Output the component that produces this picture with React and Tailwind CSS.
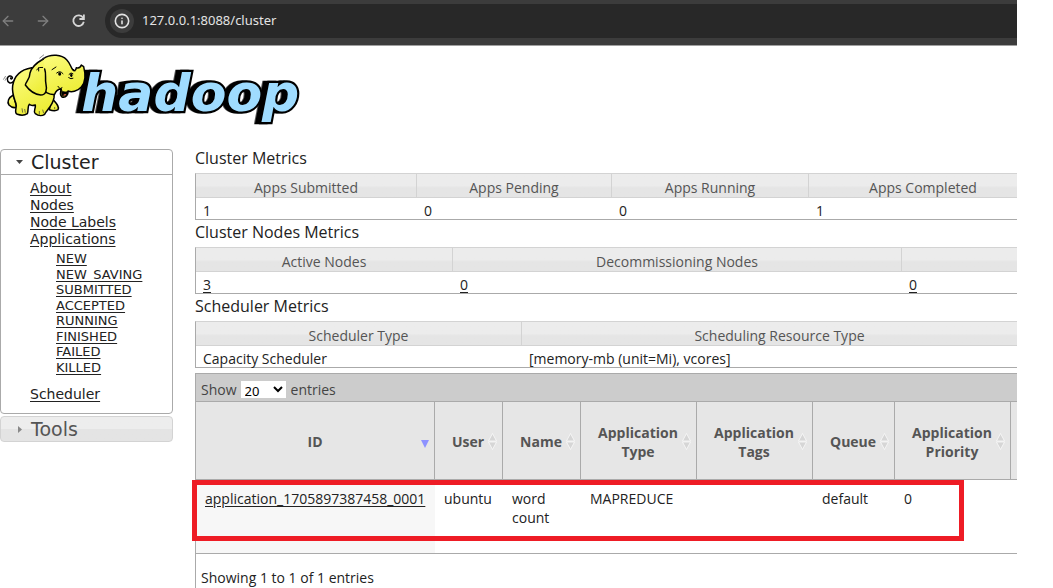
import { ArrowLeft, ArrowRight, Info } from "lucide-react";

const appLinks = ["NEW", "NEW_SAVING", "SUBMITTED", "ACCEPTED", "RUNNING", "FINISHED", "FAILED", "KILLED"];

function BrowserBar() {
  return (
    <header className="flex h-[46px] items-center border-b border-[#a0a0a0] bg-[#3c3c3c] pb-1">
      <button aria-label="Back" className="flex w-[35px] justify-start text-[#7f7f7f]">
        <ArrowLeft size={16} strokeWidth={2} />
      </button>
      <button aria-label="Forward" className="flex w-9 justify-start text-[#7f7f7f]">
        <ArrowRight size={16} strokeWidth={2} />
      </button>
      <button aria-label="Reload" className="flex w-[34px] justify-start text-[#d6d6d6]">
        <svg width="15" height="15" viewBox="0 0 15 15" fill="none" stroke="currentColor" strokeWidth="1.8">
          <path d="M12.1 4.8A5.3 5.3 0 1 0 12.8 8.8" />
          <path d="M12.9 1.5V6H8.4" />
        </svg>
      </button>
      <div className="flex h-[34px] flex-1 items-center gap-2 rounded-l-full bg-[#282828] pl-[5px]">
        <button aria-label="Site information" className="flex size-6 items-center justify-center rounded-full bg-[#3c3c3c] text-[#e3e3e3]">
          <Info size={16} strokeWidth={2.4} />
        </button>
        <input
          aria-label="Address"
          readOnly
          value="127.0.0.1:8088/cluster"
          className="flex-1 bg-transparent font-['Noto_Sans',sans-serif] text-[13px] text-[#e3e3e3] outline-none"
        />
      </div>
    </header>
  );
}

function Logo() {
  return (
    <svg className="block h-[89px] w-[310px]" viewBox="0 3 930 267" role="img" aria-label="hadoop">
      <defs>
        <linearGradient id="skin" x1="0" y1="0" x2="0.5" y2="1">
          <stop offset="0" stopColor="#fcfc84" />
          <stop offset="1" stopColor="#eeee38" />
        </linearGradient>
      </defs>
      <g className="drop-shadow-[-14px_0_0_#000]">
        <text
          x="244"
          y="199"
          fontFamily="'DejaVu Sans', sans-serif"
          fontWeight="bold"
          fontStyle="italic"
          fontSize="156"
          fill="#9fdcff"
          stroke="#000"
          strokeWidth="13"
          paintOrder="stroke"
        >
          hadoop
        </text>
      </g>
      <g stroke="#000" strokeWidth="4.5" strokeLinecap="round" strokeLinejoin="round" fill="url(#skin)">
        <path d="M40 150C26 158 20 170 27 180C34 187 44 189 50 186Z" />
        <path d="M156 160C166 172 180 184 174 194C168 198 154 196 148 194Z" />
        <path d="M42 108C32 120 22 112 22 102C23 91 34 91 37 97C38 103 31 103 32 99" fill="none" />
        <path d="M95 68C60 74 42 96 38 122C35 144 42 158 48 176C52 188 40 203 52 208C64 212 76 210 82 206C86 196 82 184 88 178C94 184 100 182 106 180C108 192 98 198 106 206C116 214 128 212 134 208C138 196 158 184 162 158L165 110Z" />
        <path d="M104 66C112 50 124 48 130 41C154 24 186 30 200 44C210 54 212 66 218 74C222 80 228 76 229 68C236 70 242 66 244 60L251 65C258 92 257 112 244 126C232 140 214 142 204 138C205 148 198 160 186 156C180 150 180 142 184 132C176 132 168 136 164 148C150 150 130 140 126 130L110 64Z" />
        <path d="M130 42C112 52 94 68 90 84C90 104 76 112 76 120C86 134 100 148 122 150C138 150 142 134 138 118C134 102 140 88 134 72" />
        <path d="M183 134C186 140 197 143 203 139C204 149 196 156 187 153Z" fill="#000" strokeWidth="2" />
        <path d="M189 151Q195 145 199 148Q196 155 189 151Z" fill="#df6747" stroke="none" />
        <path d="M174 124L180 131L186 128M224 78L219 72M206 98Q213 104 219 100M110 74Q118 64 128 67M116 68V78M156 74L168 66M170 84Q180 75 189 86M207 88Q213 80 219 86" fill="none" strokeWidth="3" />
        <ellipse cx="179" cy="87" rx="4.5" ry="5.5" fill="#000" stroke="none" />
        <ellipse cx="214" cy="91" rx="3.5" ry="5.5" fill="#000" stroke="none" />
      </g>
      <path d="M66 190L68 203M74 192L76 203M118 198V209M128 194L131 205M164 186V193" fill="none" stroke="#333" strokeWidth="2" />
      <path d="M118 40L132 29M122 46L134 37M10 104L17 93M15 107L20 98" fill="none" stroke="#555" strokeWidth="2" />
    </svg>
  );
}

function Sidebar() {
  const link = "w-fit underline underline-offset-2";
  return (
    <nav className="w-[173px] shrink-0 font-['DejaVu_Sans',sans-serif] text-[#222]">
      <section className="rounded border border-[#aaa] pb-[10px]">
        <h3 className="border-b border-[#aaa]">
          <button aria-expanded="true" className="flex h-6 items-center gap-2 pl-[15px] text-[19px]">
            <svg width="7" height="4" viewBox="0 0 7 4"><path d="M0 0H7L3.5 4Z" fill="#454545" /></svg>
            Cluster
          </button>
        </h3>
        <div className="flex flex-col pt-[5px] pl-[29px] text-[14px] leading-[17px]">
          <a href="#about" className={link}>About</a>
          <a href="#nodes" className={link}>Nodes</a>
          <a href="#labels" className={link}>Node Labels</a>
          <a href="#apps" className={link}>Applications</a>
          <div className="mt-[3px] mb-[11px] grid h-31 pl-[26px] text-[13px] leading-[15px]">
            {appLinks.map((name) => (
              <a key={name} href={"#" + name} className={link}>{name}</a>
            ))}
          </div>
          <a href="#scheduler" className={link}>Scheduler</a>
        </div>
      </section>
      <section className="mt-[2px] rounded border border-[#d3d3d3] bg-linear-to-b from-[#ededed] from-50% to-[#e4e4e4] to-50%">
        <button aria-expanded="false" className="flex h-6 items-center gap-[9px] pl-[17px] text-[19px] text-[#555]">
          <svg width="4" height="7" viewBox="0 0 4 7"><path d="M0 0V7L4 3.5Z" fill="#888" /></svg>
          Tools
        </button>
      </section>
    </nav>
  );
}

function Metrics({ title, widths, heads, cells, links }) {
  return (
    <section>
      <h2 className="h-[27px] text-[16px] leading-[25px]">{title}</h2>
      <table className="w-[calc(100%+22px)] table-fixed border-separate border-spacing-0 border border-[#aaa] border-t-[#d3d3d3] text-[14px]">
        <colgroup>
          {widths.map((w, i) => <col key={i} className={w} />)}
        </colgroup>
        <thead>
          <tr>
            {heads.map((h, i) => (
              <th key={i} className="h-6 border-r border-b border-[#d3d3d3] bg-linear-to-b from-[#ececec] from-50% to-[#e5e5e5] to-60% p-0 pt-[5px] leading-[18px] font-normal text-[#555]">{h}</th>
            ))}
          </tr>
        </thead>
        <tbody>
          <tr>
            {cells.map((c, i) => (
              <td key={i} className="p-0 pl-[7px]">
                <div className="h-[21px] leading-[25px]">{links ? <a href="#nodes" className="underline underline-offset-2">{c}</a> : c}</div>
              </td>
            ))}
          </tr>
        </tbody>
      </table>
    </section>
  );
}

function SortIcon({ active }) {
  return active ? (
    <svg className="mt-1 shrink-0" width="8" height="8" viewBox="0 0 8 8"><path d="M0 0H8L4 8Z" fill="#8d92ff" /></svg>
  ) : (
    <svg className="shrink-0" width="9" height="17" viewBox="0 0 9 17">
      <path d="M4.5 .5L8.5 8H.5ZM.5 9H8.5L4.5 16.5Z" fill="#d6d6d6" stroke="#fafafa" strokeWidth=".8" />
    </svg>
  );
}

const columns = [
  { w: "w-[239px]", name: "ID", active: true },
  { w: "w-[68px]", name: "User" },
  { w: "w-[78px]", name: "Name" },
  { w: "w-[116px]", name: "Application Type" },
  { w: "w-[116px]", name: "Application Tags" },
  { w: "w-[82px]", name: "Queue" },
  { w: "w-[116px]", name: "Application Priority" },
];
const row = [null, "ubuntu", "word count", "MAPREDUCE", "", "default", "0"];

function Applications() {
  return (
    <section className="mt-[5px] border-t border-l border-[#aaa] text-[14px] leading-[19px]">
      <div className="flex h-7 items-center border-b border-[#aaa] bg-[#ccc] pt-1 pl-[5px] text-[#444]">
        <label className="flex items-center gap-1">
          Show
          <select className="mr-px h-[17px] w-[45px] bg-white font-['Noto_Sans',sans-serif] text-[13px] leading-4 text-black" defaultValue="20">
            <option>20</option>
            <option>50</option>
            <option>100</option>
          </select>
          entries
        </label>
      </div>
      <div className="relative">
        <table className="w-full table-fixed border-separate border-spacing-0">
          <colgroup>
            {columns.map((c) => <col key={c.name} className={c.w} />)}
            <col />
          </colgroup>
          <thead>
            <tr>
              {columns.map((c) => (
                <th key={c.name} className="h-[78px] border-r border-b border-[#aaa] bg-[#e6e6e6] pt-[2px] pr-[5px] pb-0 pl-[13px] font-bold text-[#555]">
                  <div className="flex items-center">
                    <span className="flex-1 px-1">{c.name}</span>
                    <SortIcon active={c.active} />
                  </div>
                </th>
              ))}
              <th aria-label="More" className="border-b border-[#aaa] bg-[#e6e6e6]" />
            </tr>
          </thead>
          <tbody>
            <tr>
              {row.map((v, i) => (
                <td key={i} className={"h-[74px] border-b border-[#aaa] px-[9px] pt-[9px] pb-0 align-top " + (i === 0 ? "bg-[#f7f7f7]" : "")}>
                  {i === 0 ? <a href="#app" className="underline underline-offset-2">application_1705897387458_0001</a> : v}
                </td>
              ))}
              <td className="border-b border-[#aaa]" />
            </tr>
          </tbody>
        </table>
        <div className="pointer-events-none absolute top-[78px] -left-1 h-[61px] w-[772px] border-5 border-[#ee1c25]" />
      </div>
      <p className="py-[14px] pl-[5px]">Showing 1 to 1 of 1 entries</p>
    </section>
  );
}

export default function App() {
  return (
    <div className="h-screen overflow-hidden bg-white pr-9">
      <BrowserBar />
      <Logo />
      <div className="flex items-start gap-[22px] pt-[11px] font-['Open_Sans',sans-serif] text-[#222]">
        <div className="pt-[3px]"><Sidebar /></div>
        <main className="-ml-1 min-w-0 flex-1 overflow-hidden pl-1">
          <Metrics
            title="Cluster Metrics"
            widths={["w-[221px]", "w-[195px]", "w-[197px]", ""]}
            heads={["Apps Submitted", "Apps Pending", "Apps Running", "Apps Completed"]}
            cells={["1", "0", "0", "1"]}
          />
          <Metrics
            title="Cluster Nodes Metrics"
            widths={["w-[257px]", "w-[449px]", ""]}
            heads={["Active Nodes", "Decommissioning Nodes", ""]}
            cells={["3", "0", "0"]}
            links
          />
          <Metrics
            title="Scheduler Metrics"
            widths={["w-[326px]", ""]}
            heads={["Scheduler Type", "Scheduling Resource Type"]}
            cells={["Capacity Scheduler", "[memory-mb (unit=Mi), vcores]"]}
          />
          <Applications />
        </main>
      </div>
    </div>
  );
}
